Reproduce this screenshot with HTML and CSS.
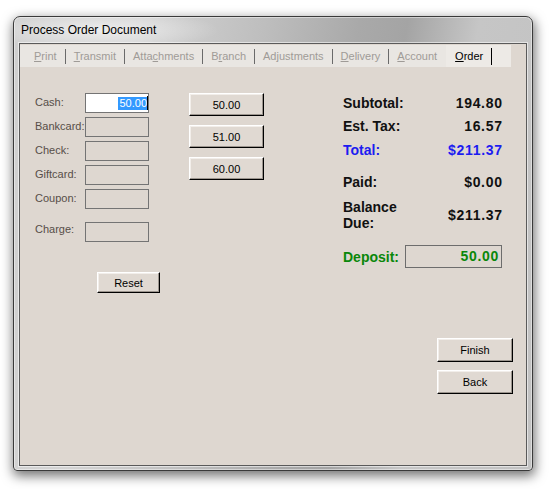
FILE: index.html
```html
<!DOCTYPE html>
<html>
<head>
<meta charset="utf-8">
<title>Process Order Document</title>
<link rel="stylesheet" href="styles.css">
</head>
<body>
<div class="window">
  <div class="titlebar"><span class="title">Process Order Document</span></div>
  <div class="panel">
    <div class="tabs">
      <span class="tab"><u>P</u>rint</span><span class="sep"></span>
      <span class="tab"><u>T</u>ransmit</span><span class="sep"></span>
      <span class="tab">Atta<u>c</u>hments</span><span class="sep"></span>
      <span class="tab">B<u>r</u>anch</span><span class="sep"></span>
      <span class="tab">Ad<u>j</u>ustments</span><span class="sep"></span>
      <span class="tab"><u>D</u>elivery</span><span class="sep"></span>
      <span class="tab"><u>A</u>ccount</span>
      <span class="tab active"><u>O</u>rder<span class="tab-mark"></span></span>
    </div>
    <div class="content">
      <div class="payments">
        <div class="prow"><span class="plabel">Cash:</span><span class="field focused"><span class="sel">50.00</span><span class="caret"></span></span></div>
        <div class="prow"><span class="plabel">Bankcard:</span><span class="field"></span></div>
        <div class="prow"><span class="plabel">Check:</span><span class="field"></span></div>
        <div class="prow"><span class="plabel">Giftcard:</span><span class="field"></span></div>
        <div class="prow"><span class="plabel">Coupon:</span><span class="field"></span></div>
        <div class="prow charge"><span class="plabel">Charge:</span><span class="field"></span></div>
        <button class="btn reset">Reset</button>
      </div>
      <div class="quick">
        <button class="btn amount">50.00</button>
        <button class="btn amount">51.00</button>
        <button class="btn amount">60.00</button>
      </div>
      <div class="totals">
        <div class="trow subtotal"><span>Subtotal:</span><span class="val">194.80</span></div>
        <div class="trow tax"><span>Est. Tax:</span><span class="val">16.57</span></div>
        <div class="trow total"><span>Total:</span><span class="val">$211.37</span></div>
        <div class="trow paid"><span>Paid:</span><span class="val">$0.00</span></div>
        <div class="trow balance"><span>Balance<br>Due:</span><span class="val">$211.37</span></div>
        <div class="trow deposit"><span>Deposit:</span><span class="dep-box">50.00</span></div>
      </div>
    </div>
    <div class="actions">
      <button class="btn action">Finish</button>
      <button class="btn action">Back</button>
    </div>
  </div>
</div>
</body>
</html>
```
FILE: styles.css
```css
html, body {
  margin: 0;
  background: #ffffff;
}
body {
  font-family: "Liberation Sans", Arial, sans-serif;
  width: 555px;
  height: 489px;
  overflow: hidden;
}
.window {
  margin: 16px 0 0 13px;
  width: 520px;
  height: 455px;
  box-sizing: border-box;
  border: 1px solid #3a3a3a;
  border-radius: 7px 7px 4px 4px;
  padding: 0 5px 4px 5px;
  display: flex;
  flex-direction: column;
  background:
    radial-gradient(ellipse 120px 20px at 85px 13px, rgba(255,255,255,0.6), rgba(255,255,255,0) 100%),
    linear-gradient(100deg, #cfcfcf 0%, #d3d3d3 22%, #bebebe 42%, #a9a9a9 58%, #a4a4a4 66%, #c6c6c6 78%, #c2c2c2 100%);
  box-shadow: 1px 4px 12px 1px rgba(0,0,0,0.55), inset 0 0 0 1px rgba(255,255,255,0.45);
}
.titlebar {
  height: 26px;
  display: flex;
  align-items: center;
  padding-left: 2px;
}
.title {
  font-family: "Liberation Sans", Arial, sans-serif;
  font-size: 12px;
  color: #000;
}
.panel {
  flex: 1;
  border: 1px solid #5a5a5a;
  box-shadow: 0 0 0 1px rgba(255,255,255,0.55);
  background: #ded7d0;
  display: flex;
  flex-direction: column;
}
.tabs {
  margin-top: 1px;
  margin-right: 15px;
  height: 22px;
  background: #e9e6e2;
  display: flex;
  align-items: center;
  padding-left: 6px;
  font-size: 11px;
}
.tab {
  padding: 0 8px;
  color: #9f9b97;
  line-height: 22px;
}
.tab u {
  text-decoration: underline;
}
.sep {
  width: 1px;
  height: 15px;
  background: #6a6a6a;
}
.tab.active {
  margin-left: 1px;
  padding-left: 9px;
  flex: 1;
  color: #000;
  background: #edeae6;
  display: flex;
  align-items: center;
  height: 22px;
}
.tab-mark {
  width: 1px;
  height: 17px;
  background: #000;
  margin-left: 8px;
}
.content {
  display: flex;
  padding: 26px 0 0 15px;
}
.payments {
  width: 114px;
  flex: none;
  display: flex;
  flex-direction: column;
  align-items: flex-start;
}
.prow {
  display: flex;
  align-items: flex-start;
  height: 20px;
}
.prow + .prow {
  margin-top: 4px;
}
.prow.charge {
  margin-top: 13px;
}
.plabel {
  width: 50px;
  font-size: 11px;
  line-height: 13px;
  padding-top: 3px;
  color: #574e48;
}
.prow.charge .plabel {
  padding-top: 1px;
}
.field {
  width: 64px;
  height: 20px;
  box-sizing: border-box;
  border: 1px solid #747474;
}
.field.focused {
  background: #ffffff;
  display: flex;
  justify-content: flex-end;
  align-items: center;
}
.sel {
  background: #3399ff;
  color: #ffffff;
  font-size: 11px;
  line-height: 13px;
  padding: 0 0 0 1px;
}
.caret {
  width: 1px;
  height: 14px;
  background: #000;
}
.btn {
  font-family: "Liberation Sans", Arial, sans-serif;
  font-size: 11px;
  color: #000;
  background: #e0d9d2;
  border: 1px solid;
  border-color: #ffffff #000000 #000000 #ffffff;
  box-shadow: inset -1px -1px #9c958e, inset 1px 1px #f2eeea;
  box-sizing: border-box;
  padding: 0;
  margin: 0;
  flex: none;
}
.reset {
  width: 63px;
  height: 21px;
  margin: 30px 0 0 62px;
}
.quick {
  display: flex;
  flex-direction: column;
  gap: 9px;
  margin-left: 40px;
}
.amount {
  width: 75px;
  height: 23px;
}
.totals {
  margin-left: 79px;
  width: 159px;
  padding-top: 2px;
  display: flex;
  flex-direction: column;
}
.trow {
  display: flex;
  justify-content: space-between;
  align-items: center;
  font-size: 14px;
  font-weight: bold;
  line-height: 16px;
  color: #111;
}
.trow .val {
  letter-spacing: 0.7px;
  margin-right: -0.7px;
}
.tax { margin-top: 7px; }
.total { margin-top: 8px; color: #1c1cf0; }
.paid { margin-top: 16px; }
.balance { margin-top: 9px; }
.deposit { margin-top: 14px; color: #0a870a; }
.dep-box {
  width: 97px;
  height: 23px;
  box-sizing: border-box;
  border: 1px solid #6d6d6d;
  text-align: right;
  padding-right: 2px;
  line-height: 21px;
  letter-spacing: 0.7px;
}
.actions {
  align-self: flex-end;
  margin: 45px 13px 0 0;
  display: flex;
  flex-direction: column;
  gap: 8px;
}
.action {
  width: 76px;
  height: 24px;
}
```
